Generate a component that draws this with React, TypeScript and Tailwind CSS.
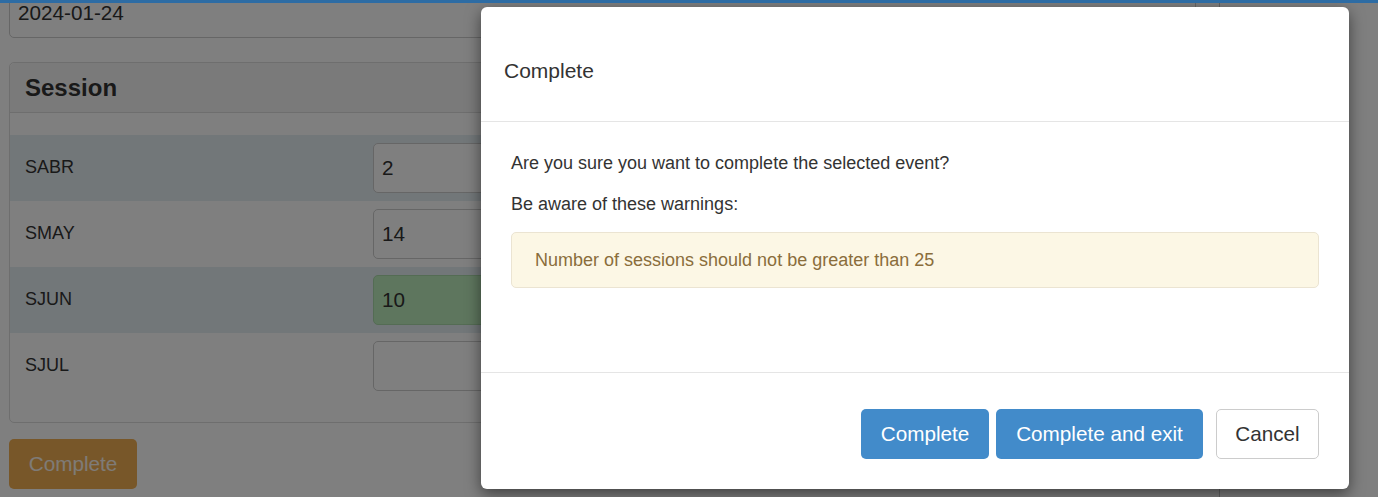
import React from "react";

const rows = [
  { label: "SABR", value: "2", striped: true, green: false },
  { label: "SMAY", value: "14", striped: false, green: false },
  { label: "SJUN", value: "10", striped: true, green: true },
  { label: "SJUL", value: "", striped: false, green: false },
];

export default function App() {
  return (
    <div className="relative w-[1378px] h-[497px] overflow-hidden bg-white font-['Liberation_Sans',Arial,sans-serif] text-[#333]">
      <div className="relative z-30 h-[3px] bg-[#2d6ca4]" />
      <div className="flex h-[494px] overflow-hidden">
        <div className="w-[1220px] shrink-0 border-r border-[#c4c4c4] pl-[9px] pr-[23px]">
          <div className="-mt-[15px] h-[50px] rounded-[5px] border border-[#ccc] bg-white pl-[8px] flex items-center text-[20.7px] leading-[20px]">
            2024-01-24
          </div>
          <div className="mt-[24px] rounded-[5px] border border-[#ddd] bg-white">
            <div className="h-[50px] border-b border-[#ddd] bg-[#f5f5f5] rounded-t-[5px] px-[15px] flex items-center text-[24px] font-bold">
              Session
            </div>
            <div className="pt-[22px] pb-[23px]">
              {rows.map((r) => (
                <div
                  key={r.label}
                  className={`h-[66px] flex items-center ${r.striped ? "bg-[#e5eef3]" : ""}`}
                >
                  <div className="w-[363px] pl-[15px] text-[18px] -mt-[1px]">{r.label}</div>
                  <div
                    className={`h-[50px] w-[500px] rounded-[5px] border pl-[8px] flex items-center text-[20.7px] ${
                      r.green ? "bg-[#bcecbc] border-[#a9d8a9]" : "bg-white border-[#ccc]"
                    }`}
                  >
                    {r.value}
                  </div>
                </div>
              ))}
            </div>
          </div>
          <button className="mt-[16px] h-[50px] w-[128px] rounded-[5px] bg-[#f0ae52] text-white/90 text-[20.7px] flex items-center justify-center">
            Complete
          </button>
        </div>
        <div className="flex-1" />
      </div>

      <div className="absolute inset-0 z-10 bg-black/50" />

      <div className="absolute left-[481px] top-[7px] z-20 w-[868px] h-[482px] rounded-[6px] bg-white shadow-[0_5px_15px_rgba(0,0,0,0.5)] flex flex-col">
        <div className="h-[115px] border-b border-[#e5e5e5] pl-[23px] pt-[50px]">
          <div className="text-[21px] leading-[28px] text-[#333]">Complete</div>
        </div>
        <div className="px-[30px] pt-[30px] pb-[84px] text-[18px] leading-[22px] text-[#333]">
          <p>Are you sure you want to complete the selected event?</p>
          <p className="mt-[19px]">Be aware of these warnings:</p>
          <div className="mt-[17px] rounded-[5px] border border-[#ebe4d2] bg-[#fcf7e5] px-[23px] py-[16px] text-[#8a6d3b]">
            Number of sessions should not be greater than 25
          </div>
        </div>
        <div className="flex-1 border-t border-[#e5e5e5] flex justify-end items-start pt-[36px] pr-[30px]">
          <button className="h-[50px] w-[128px] rounded-[5px] bg-[#428bca] text-white text-[20.7px] flex items-center justify-center">
            Complete
          </button>
          <button className="ml-[7px] h-[50px] w-[207px] rounded-[5px] bg-[#428bca] text-white text-[20.7px] flex items-center justify-center">
            Complete and exit
          </button>
          <button className="ml-[13px] h-[50px] w-[103px] rounded-[5px] border border-[#ccc] bg-white text-[#333] text-[20.7px] flex items-center justify-center">
            Cancel
          </button>
        </div>
      </div>
    </div>
  );
}
